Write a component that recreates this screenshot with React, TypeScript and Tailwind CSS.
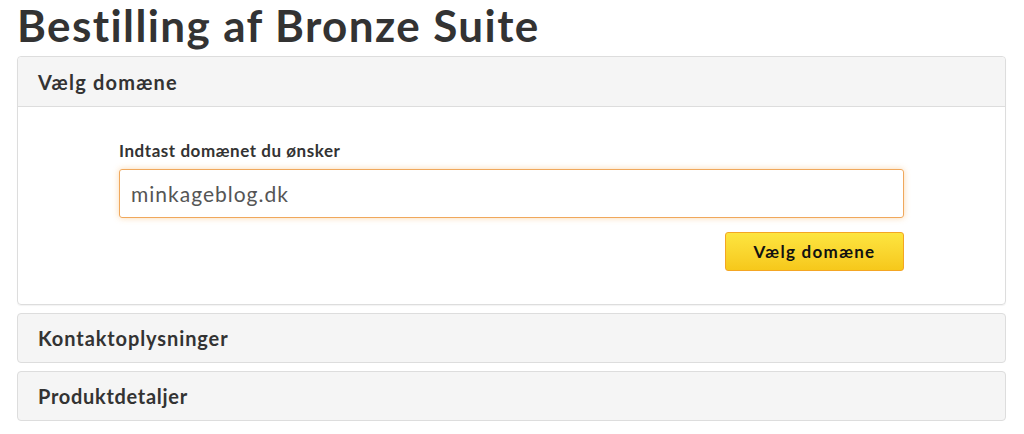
import React from "react";

export default function App() {
  return (
    <div className="w-[1024px] h-[434px] bg-white overflow-hidden text-[#333]" style={{ fontFamily: "Lato, 'Open Sans', sans-serif" }}>
      <div className="pl-[17px] pr-[18px]">
        <h1 className="text-[44px] font-bold leading-[50px] h-[56px] tracking-[1.4px]">Bestilling af Bronze Suite</h1>
        <div className="border border-[#dddddd] rounded-[4px] shadow-[0_1px_1px_rgba(0,0,0,0.05)]">
          <div className="h-[50px] bg-[#f5f5f5] border-b border-[#dddddd] rounded-t-[4px] flex items-center pl-[20px] text-[20px] font-bold tracking-[1.2px]">Vælg domæne</div>
          <div className="px-[101px] pt-[34px] pb-[33px]">
            <label className="block text-[17px] font-bold leading-[20px] mb-[8px] tracking-[0.55px]">Indtast domænet du ønsker</label>
            <div className="h-[49px] border border-[#f0a85c] rounded-[3px] shadow-[0_0_6px_rgba(247,170,80,0.45)] flex items-center pl-[11px] text-[21px] text-[#555] tracking-[1px]">minkageblog.dk</div>
            <div className="flex justify-end mt-[14px]">
              <button className="w-[179px] h-[39px] rounded-[3px] border border-[#f4a623] bg-gradient-to-b from-[#fde53f] to-[#f6c81a] text-[17px] font-bold text-[#111] tracking-[1.3px]">Vælg domæne</button>
            </div>
          </div>
        </div>
        <div className="mt-[8px] h-[50px] border border-[#dddddd] rounded-[4px] bg-[#f5f5f5] flex items-center pl-[20px] text-[20px] font-bold tracking-[0.9px]">Kontaktoplysninger</div>
        <div className="mt-[8px] h-[50px] border border-[#dddddd] rounded-[4px] bg-[#f5f5f5] flex items-center pl-[20px] text-[20px] font-bold tracking-[0.7px]">Produktdetaljer</div>
      </div>
    </div>
  );
}
